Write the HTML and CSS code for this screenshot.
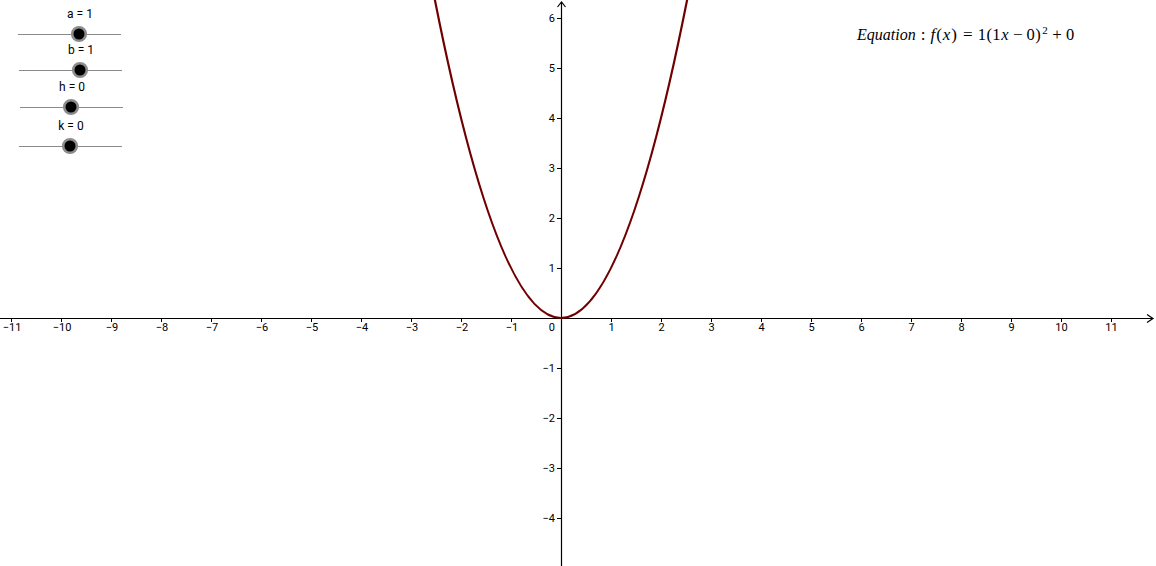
FILE: index.html
```html
<!DOCTYPE html>
<html>
<head>
<meta charset="utf-8">
<link rel="stylesheet" href="styles.css">
</head>
<body>
<div class="canvas">
<svg class="graph" width="1156" height="566" viewBox="0 0 1156 566">
  <g class="axes">
    <line x1="0" y1="318.5" x2="1153" y2="318.5"/>
    <line x1="561.5" y1="2" x2="561.5" y2="566"/>
    <polyline class="arrow" points="1147,314.5 1153,318.5 1147,322.5"/>
    <polyline class="arrow" points="557.5,7 561.5,2 565.5,7"/>
  </g>
  <g class="ticks">
    <path d="M11.5,318v4 M61.5,318v4 M111.5,318v4 M161.5,318v4 M211.5,318v4 M261.5,318v4 M311.5,318v4 M361.5,318v4 M411.5,318v4 M461.5,318v4 M511.5,318v4 M611.5,318v4 M661.5,318v4 M711.5,318v4 M761.5,318v4 M811.5,318v4 M861.5,318v4 M911.5,318v4 M961.5,318v4 M1011.5,318v4 M1061.5,318v4 M1111.5,318v4"/>
    <path d="M557,18.5h4 M557,68.5h4 M557,118.5h4 M557,168.5h4 M557,218.5h4 M557,268.5h4 M557,368.5h4 M557,418.5h4 M557,468.5h4 M557,518.5h4"/>
  </g>
  <g class="xlabels">
    <text x="12" y="331">−11</text>
    <text x="62" y="331">−10</text>
    <text x="112" y="331">−9</text>
    <text x="162" y="331">−8</text>
    <text x="212" y="331">−7</text>
    <text x="262" y="331">−6</text>
    <text x="312" y="331">−5</text>
    <text x="362" y="331">−4</text>
    <text x="412" y="331">−3</text>
    <text x="462" y="331">−2</text>
    <text x="512" y="331">−1</text>
    <text x="611.5" y="331">1</text>
    <text x="661.5" y="331">2</text>
    <text x="711.5" y="331">3</text>
    <text x="761.5" y="331">4</text>
    <text x="811.5" y="331">5</text>
    <text x="861.5" y="331">6</text>
    <text x="911.5" y="331">7</text>
    <text x="961.5" y="331">8</text>
    <text x="1011.5" y="331">9</text>
    <text x="1061.5" y="331">10</text>
    <text x="1111.5" y="331">11</text>
  </g>
  <g class="ylabels">
    <text x="555" y="331">0</text>
    <text x="555" y="22">6</text>
    <text x="555" y="72">5</text>
    <text x="555" y="122">4</text>
    <text x="555" y="172">3</text>
    <text x="555" y="222">2</text>
    <text x="555" y="272">1</text>
    <text x="555" y="372">−1</text>
    <text x="555" y="422">−2</text>
    <text x="555" y="472">−3</text>
    <text x="555" y="522">−4</text>
  </g>
  <path class="curve" d="M431,-20 Q561,656 691,-20"/>

  <g class="sliders">
    <text class="slabel" x="80" y="18">a = 1</text>
    <line class="track" x1="18" y1="34.5" x2="121" y2="34.5"/>
    <circle class="knob" cx="79" cy="34" r="6.8"/>

    <text class="slabel" x="81" y="54">b = 1</text>
    <line class="track" x1="19" y1="70.5" x2="122" y2="70.5"/>
    <circle class="knob" cx="80" cy="70" r="6.8"/>

    <text class="slabel" x="72" y="91">h = 0</text>
    <line class="track" x1="20" y1="107.5" x2="123" y2="107.5"/>
    <circle class="knob" cx="71" cy="107" r="6.8"/>

    <text class="slabel" x="71" y="130">k = 0</text>
    <line class="track" x1="19" y1="146.5" x2="122" y2="146.5"/>
    <circle class="knob" cx="70" cy="146" r="6.8"/>
  </g>
</svg>
<div class="equation"><i class="word">Equation</i><span class="rel">:</span><span class="fx"><i>f</i>(<i>x</i>)</span><span class="rel">=</span><span class="rest">1(1<i>x</i></span><span class="bin">−</span><span class="rest">0)<sup>2</sup></span><span class="bin">+</span><span class="rest">0</span></div>
</div>
</body>
</html>
```
FILE: styles.css
```css
html, body {
  margin: 0;
  padding: 0;
  background: #ffffff;
}
.canvas {
  position: relative;
  width: 1156px;
  height: 566px;
  overflow: hidden;
}
.graph {
  display: block;
}
.axes line, .arrow {
  stroke: #000;
  stroke-width: 1.2;
  fill: none;
}
.ticks path {
  stroke: #000;
  stroke-width: 1;
  fill: none;
}
.xlabels text, .ylabels text {
  font-family: Roboto, "Liberation Sans", sans-serif;
  font-size: 11px;
  fill: #000;
}
.xlabels text {
  text-anchor: middle;
}
.ylabels text {
  text-anchor: end;
}
.curve {
  fill: none;
  stroke: #700000;
  stroke-width: 2.2;
}
.slabel {
  font-family: Roboto, "Liberation Sans", sans-serif;
  font-size: 12px;
  text-anchor: middle;
  fill: #000;
}
.track {
  stroke: #8a8a8a;
  stroke-width: 1;
}
.knob {
  fill: #000;
  stroke: #8c8c8c;
  stroke-width: 2.6;
}
.equation {
  position: absolute;
  left: 857px;
  top: 25px;
  font-family: "Liberation Serif", "DejaVu Serif", serif;
  font-size: 15.5px;
  white-space: nowrap;
  color: #000;
  display: flex;
  align-items: baseline;
}
.equation i {
  font-style: italic;
}
.word {
  font-size: 16px;
}
.rel {
  font-size: 17px;
  margin: 0 5px;
}
.fx {
  font-size: 17px;
  letter-spacing: 1px;
}
.rest {
  font-size: 16.5px;
  letter-spacing: 0.5px;
}
.bin {
  font-size: 17px;
  margin: 0 4px;
}
.equation sup {
  font-size: 11px;
  line-height: 0;
  vertical-align: 6px;
  margin-left: 1px;
}
```
